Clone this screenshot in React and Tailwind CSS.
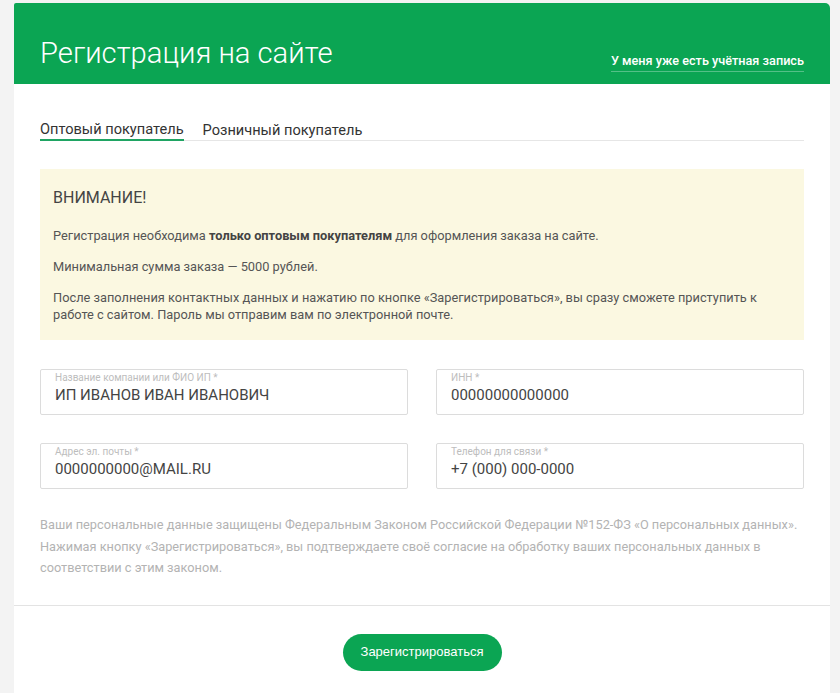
export default function App() {
  const fields = [
    ['Название компании или ФИО ИП *', 'ИП ИВАНОВ ИВАН ИВАНОВИЧ'],
    ['ИНН *', '00000000000000'],
    ['Адрес эл. почты *', '0000000000@MAIL.RU'],
    ['Телефон для связи *', '+7 (000) 000-0000'],
  ];

  return (
    <div className="min-h-screen bg-[#f3f3f3] pl-[14px] pt-[3px] font-['Roboto',sans-serif]">
      <div className="w-[816px] bg-white rounded-tr-[5px] rounded-tl-[2px] overflow-hidden">
        <header className="h-[81px] bg-[#0ba553] flex justify-between items-start px-[26px]">
          <h1 className="mt-[36px] text-[29.2px] leading-[28px] font-light text-white">Регистрация на сайте</h1>
          <a href="#" className="mt-[50px] text-[12.7px] leading-[16px] font-medium text-white border-b border-white/30 pb-[2px]">
            У меня уже есть учётная запись
          </a>
        </header>

        <div className="px-[26px]">
          <div className="mt-[33px] flex gap-[19px] border-b border-[#e6e6e6] text-[14.6px] leading-[20px] text-[#333]">
            <button className="border-b-2 border-[#1fa463] -mb-px pt-[2px] pb-[0px]">Оптовый покупатель</button>
            <button className="pt-[2px]">Розничный покупатель</button>
          </div>

          <div className="mt-[28px] bg-[#fbf8e1] px-[13px] pt-[18px] pb-[17px] text-[#555]">
            <h2 className="text-[16px] leading-[22px] text-[#444]">ВНИМАНИЕ!</h2>
            <p className="mt-[18px] text-[12.8px] leading-[17px]">
              Регистрация необходима <b className="font-bold text-[#444]">только оптовым покупателям</b> для оформления заказа на сайте.
            </p>
            <p className="mt-[14px] text-[12.8px] leading-[17px]">Минимальная сумма заказа — 5000 рублей.</p>
            <p className="mt-[14px] text-[12.8px] leading-[17px]">
              После заполнения контактных данных и нажатию по кнопке «Зарегистрироваться», вы сразу сможете приступить к работе с сайтом. Пароль мы отправим вам по электронной почте.
            </p>
          </div>

          <div className="mt-[29px] grid grid-cols-2 gap-x-[28px] gap-y-[28px]">
            {fields.map(([label, value]) => (
              <div key={label} className="h-[46px] border border-[#dcdcdc] rounded-[2px] px-[14px] pt-[2px]">
                <div className="text-[10px] leading-[12px] text-[#bdbdbd]">{label}</div>
                <div className="text-[15px] leading-[22px] text-[#444]">{value}</div>
              </div>
            ))}
          </div>

          <p className="mt-[25px] text-[12.75px] leading-[21.5px] text-[#b3b3b3]">
            Ваши персональные данные защищены Федеральным Законом Российской Федерации №152-ФЗ «О персональных данных». Нажимая кнопку «Зарегистрироваться», вы подтверждаете своё согласие на обработку ваших персональных данных в соответствии с этим законом.
          </p>
        </div>

        <div className="mt-[26px] border-t border-[#e3e3e3] pt-[28px] pb-[30px] flex justify-center">
          <button className="h-[37px] w-[159px] rounded-full bg-[#0ba553] text-white text-[13px] font-['Liberation_Sans',sans-serif]">
            Зарегистрироваться
          </button>
        </div>
      </div>
    </div>
  );
}
